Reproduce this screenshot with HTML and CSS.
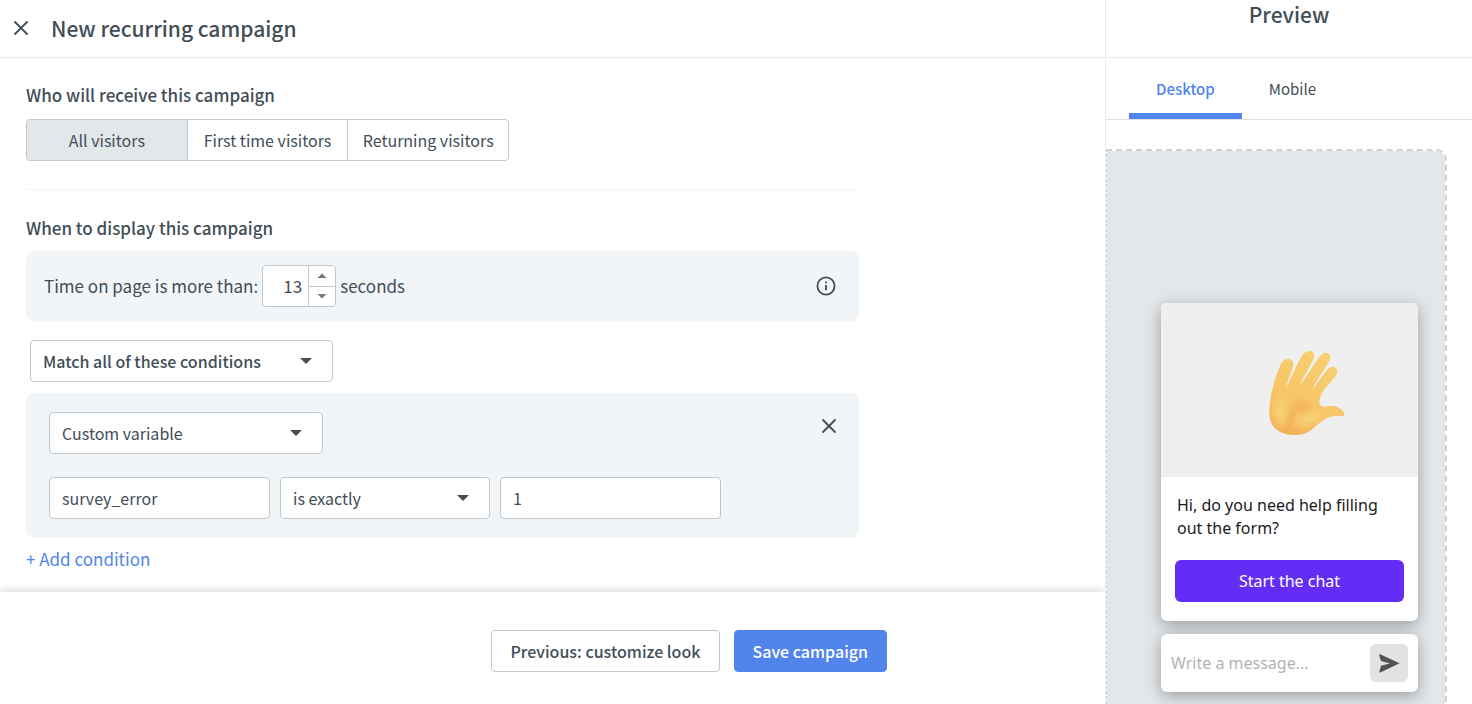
FILE: index.html
```html
<!DOCTYPE html>
<html lang="en">
<head>
<meta charset="UTF-8">
<meta name="viewport" content="width=device-width, initial-scale=1.0">
<title>New recurring campaign</title>
<link rel="stylesheet" href="styles.css">
</head>
<body>
<div class="app">
    <div class="editor">
        <header class="editor-header">
            <button class="icon-btn" type="button" aria-label="Close">
                <svg width="14" height="14" viewBox="0 0 14 14"><path d="M1 1L13 13M13 1L1 13"/></svg>
            </button>
            <h1>New recurring campaign</h1>
        </header>
        <main class="content">
            <section>
                <h2>Who will receive this campaign</h2>
                <div class="segmented">
                    <button class="active" type="button">All visitors</button>
                    <button type="button">First time visitors</button>
                    <button type="button">Returning visitors</button>
                </div>
            </section>
            <hr>
            <section>
                <h2>When to display this campaign</h2>
                <div class="panel time-panel">
                    <label for="seconds">Time on page is more than:</label>
                    <div class="stepper">
                        <input type="text" inputmode="numeric" id="seconds" value="13">
                        <div class="stepper-btns">
                            <button type="button" aria-label="Increase"><svg width="10" height="5" viewBox="0 0 10 5"><path d="M0.5 5L5 0.5L9.5 5Z"/></svg></button>
                            <button type="button" aria-label="Decrease"><svg width="10" height="5" viewBox="0 0 10 5"><path d="M0.5 0L5 4.5L9.5 0Z"/></svg></button>
                        </div>
                    </div>
                    <span>seconds</span>
                    <button class="icon-btn info" type="button" aria-label="More info">
                        <svg width="20" height="20" viewBox="0 0 20 20"><circle cx="10" cy="10" r="8.6"/><path d="M10 9V14.2M10 5.5V7.3"/></svg>
                    </button>
                </div>
                <div class="select match-select">
                    <select aria-label="Match conditions">
                        <option>Match all of these conditions</option>
                        <option>Match any of these conditions</option>
                    </select>
                </div>
                <div class="panel condition">
                    <div class="condition-row">
                        <div class="select type-select">
                            <select aria-label="Condition type">
                                <option>Custom variable</option>
                            </select>
                        </div>
                        <button class="icon-btn remove" type="button" aria-label="Remove condition">
                            <svg width="14" height="14" viewBox="0 0 14 14"><path d="M1 1L13 13M13 1L1 13"/></svg>
                        </button>
                    </div>
                    <div class="condition-row">
                        <input class="field" type="text" aria-label="Variable name" value="survey_error">
                        <div class="select operator-select">
                            <select aria-label="Operator">
                                <option>is exactly</option>
                            </select>
                        </div>
                        <input class="field" type="text" aria-label="Value" value="1">
                    </div>
                </div>
                <a class="add-link" href="#">+ Add condition</a>
            </section>
        </main>
        <footer class="editor-footer">
            <button class="btn" type="button">Previous: customize look</button>
            <button class="btn btn-primary" type="button">Save campaign</button>
        </footer>
    </div>
    <aside class="preview">
        <h2 class="preview-title">Preview</h2>
        <nav class="tabs">
            <button class="active" type="button">Desktop</button>
            <button type="button">Mobile</button>
        </nav>
        <div class="stage">
            <div class="card">
                <svg class="media" viewBox="-237 -81 771 522" aria-hidden="true">
                    <defs>
                        <linearGradient id="skin" x1="0.2" y1="1" x2="0.7" y2="0">
                            <stop offset="0" stop-color="#f5ae55"/>
                            <stop offset="0.35" stop-color="#f7c467"/>
                            <stop offset="1" stop-color="#f6d06f"/>
                        </linearGradient>
                        <radialGradient id="glow">
                            <stop offset="0" stop-color="#f8d479"/>
                            <stop offset="1" stop-color="#f8d479" stop-opacity="0"/>
                        </radialGradient>
                        <radialGradient id="shade">
                            <stop offset="0" stop-color="#f2ae55" stop-opacity="0.7"/>
                            <stop offset="1" stop-color="#f2ae55" stop-opacity="0"/>
                        </radialGradient>
                    </defs>
                    <path fill="url(#skin)" d="M88 250C88 212 98 160 122 103C127 91 137 86 147 87C159 89 162 100 158 113C151 134 142 154 138 174C153 147 168 107 187 76C194 65 205 60 214 64C224 69 224 80 218 92C204 117 188 145 178 170C196 145 218 108 239 79C248 68 259 65 267 71C274 79 271 90 264 100C246 128 228 154 217 180C230 163 247 136 261 120C269 110 279 107 287 113C295 120 292 132 284 142C264 166 238 190 238 217C239 228 249 233 261 229C283 223 304 234 313 250C315 257 310 260 302 258C276 253 252 266 230 286C209 304 200 315 166 315C118 315 89 294 88 250Z"/>
                    <ellipse cx="122" cy="246" rx="36" ry="58" fill="url(#glow)"/>
                    <ellipse cx="205" cy="265" rx="60" ry="34" fill="url(#glow)" transform="rotate(-18 205 265)"/>
                    <ellipse cx="183" cy="232" rx="46" ry="34" fill="url(#shade)"/>
                    <ellipse cx="152" cy="268" rx="18" ry="34" fill="url(#shade)" transform="rotate(20 152 268)"/>
                </svg>
                <div class="card-body">
                    <p>Hi, do you need help filling out the form?</p>
                    <button class="chat-btn" type="button">Start the chat</button>
                </div>
            </div>
            <div class="composer">
                <input type="text" aria-label="Message" placeholder="Write a message...">
                <button type="button" aria-label="Send">
                    <svg width="21" height="19" viewBox="0 0 21 19"><path d="M1.2 0.3L20.6 9.2L1.2 18.6Q0.2 18.9 0.4 17.8L2 11.7L10.8 9.4L2 7L0.2 1.2Q0 0 1.2 0.3Z"/></svg>
                </button>
            </div>
        </div>
    </aside>
</div>
</body>
</html>
```
FILE: styles.css
```css
* {
    box-sizing: border-box;
}
body {
    margin: 0;
    font-family: "Noto Sans CJK SC", "Open Sans", sans-serif;
    font-size: 16px;
    line-height: 24px;
    color: #424d57;
    background: #fff;
}
button, input, select {
    font: inherit;
    color: inherit;
    margin: 0;
}
button {
    cursor: pointer;
    background: none;
    border: 0;
    padding: 0;
}
h1, h2, p {
    margin: 0;
}
h2 {
    font-size: 17px;
    font-weight: 500;
}
h1, .preview-title {
    font-size: 21px;
    font-weight: 500;
    line-height: 28px;
}
.app {
    display: grid;
    grid-template-columns: minmax(0, 1fr) 367px;
    min-height: 100vh;
}
.editor {
    display: flex;
    flex-direction: column;
}
.editor-header {
    display: flex;
    align-items: center;
    gap: 23px;
    height: 58px;
    padding: 0 14px 2px;
    border-bottom: 1px solid #e9ebed;
}
.icon-btn {
    display: flex;
}
.icon-btn svg {
    fill: none;
    stroke: #424d57;
    stroke-width: 1.8;
    stroke-linecap: round;
}
.content {
    flex: 1;
    padding: 25px 26px 10px;
}
.content > * {
    max-width: 833px;
}
hr {
    height: 1px;
    margin: 28px 0 26px;
    border: 0;
    background: #f3f5f6;
}
.segmented {
    display: flex;
    width: 483px;
    height: 42px;
    margin-top: 12px;
    border: 1px solid #bfc7cf;
    border-radius: 4px;
    overflow: hidden;
}
.segmented button {
    flex: 1;
}
.segmented button + button {
    border-left: 1px solid #bfc7cf;
}
.segmented .active {
    background: #e2e7ea;
}
.panel {
    background: #f1f5f8;
    border-radius: 8px;
}
.time-panel {
    display: flex;
    align-items: center;
    gap: 4px;
    height: 70px;
    margin: 11px 0 19px;
    padding: 0 23px 0 18px;
    font-size: 17px;
}
.stepper {
    display: flex;
    width: 74px;
    height: 42px;
    background: #fff;
    border: 1px solid #bfc7cf;
    border-radius: 4px;
}
.stepper input {
    flex: 1;
    min-width: 0;
    padding: 0 6px 0 0;
    border: 0;
    background: none;
    text-align: right;
}
.stepper-btns {
    display: flex;
    flex-direction: column;
    width: 27px;
    border-left: 1px solid #bfc7cf;
}
.stepper-btns button {
    display: flex;
    flex: 1;
    align-items: center;
    justify-content: center;
}
.stepper-btns button + button {
    border-top: 1px solid #bfc7cf;
}
.stepper-btns svg {
    fill: #6f7a84;
}
.info {
    margin-left: auto;
}
.icon-btn.info svg {
    stroke-linecap: butt;
}
.select {
    position: relative;
}
.select::after {
    content: "";
    position: absolute;
    top: 18px;
    right: 21px;
    border: 6px solid transparent;
    border-top-color: #424d57;
    border-bottom: 0;
    pointer-events: none;
}
.select select, .field {
    display: block;
    width: 100%;
    height: 42px;
    padding: 0 12px;
    border: 1px solid #bfc7cf;
    border-radius: 4px;
    background: #fff;
    appearance: none;
}
.match-select {
    width: 303px;
    margin: 0 0 11px 4px;
    font-weight: 500;
}
.condition {
    display: flex;
    flex-direction: column;
    gap: 23px;
    padding: 19px 23px;
}
.condition-row {
    display: flex;
    gap: 10px;
}
.type-select {
    width: 274px;
}
.operator-select {
    width: 210px;
}
.condition-row .field {
    width: 221px;
}
.remove {
    align-self: flex-start;
    margin: 7px 0 0 auto;
}
.add-link {
    display: inline-block;
    margin-top: 9px;
    color: #5185ec;
    font-size: 17px;
    text-decoration: none;
}
.editor-footer {
    display: flex;
    justify-content: flex-end;
    gap: 14px;
    padding: 38px 218px 32px 26px;
    background: #fff;
    box-shadow: 0 0 10px rgba(0, 0, 0, 0.2);
    clip-path: inset(-20px 0 0 0);
}
.btn {
    height: 42px;
    padding: 0 18px;
    border: 1px solid #bfc7cf;
    border-radius: 4px;
    background: #fff;
    font-weight: 500;
}
.btn-primary {
    border-color: #5185ec;
    background: #5185ec;
    color: #fff;
}

/* preview column */
.preview {
    display: flex;
    flex-direction: column;
    border-left: 1px solid #e9ebed;
}
.preview-title {
    height: 58px;
    border-bottom: 1px solid #e9ebed;
    text-align: center;
}
.tabs {
    display: flex;
    height: 62px;
    padding-left: 23px;
    border-bottom: 1px solid #dfe2e4;
    font-size: 15px;
}
.tabs button {
    padding: 6px 27px 0;
    border-bottom: 6px solid transparent;
}
.tabs .active {
    border-bottom-color: #5185ec;
    color: #5185ec;
    font-weight: 500;
}
.stage {
    display: flex;
    flex: 1;
    flex-direction: column;
    justify-content: flex-end;
    gap: 13px;
    margin: 29px 25px 0 0;
    padding: 60px 27px 12px 54px;
    border: 2px dashed #ccd2d7;
    border-width: 2px 2px 0 1px;
    border-radius: 0 10px 0 0;
    background: #e3e7ea;
    background-clip: padding-box;
    font-family: "Noto Sans", sans-serif;
}
.card, .composer {
    border-radius: 6px;
    background: #fff;
    box-shadow: 0 4px 16px rgba(0, 0, 0, 0.32);
}
.card {
    overflow: hidden;
}
.media {
    display: block;
    width: 100%;
    background: #efefef;
}
.card-body {
    padding: 17px 14px 19px;
    color: #1b1b1b;
    line-height: 23px;
}
.card-body p {
    padding: 0 2px;
}
.chat-btn {
    width: 100%;
    height: 42px;
    margin-top: 20px;
    border-radius: 6px;
    background: #632df6;
    color: #fff;
}
.composer {
    display: flex;
    align-items: center;
    height: 58px;
    padding: 0 10px;
}
.composer input {
    flex: 1;
    min-width: 0;
    padding: 0;
    border: 0;
    background: none;
}
.composer input::placeholder {
    color: #b3b3b3;
    opacity: 1;
}
.composer button {
    display: flex;
    align-items: center;
    justify-content: center;
    width: 38px;
    height: 38px;
    border-radius: 6px;
    background: #e2e2e2;
}
.composer svg {
    fill: #525252;
}
```
